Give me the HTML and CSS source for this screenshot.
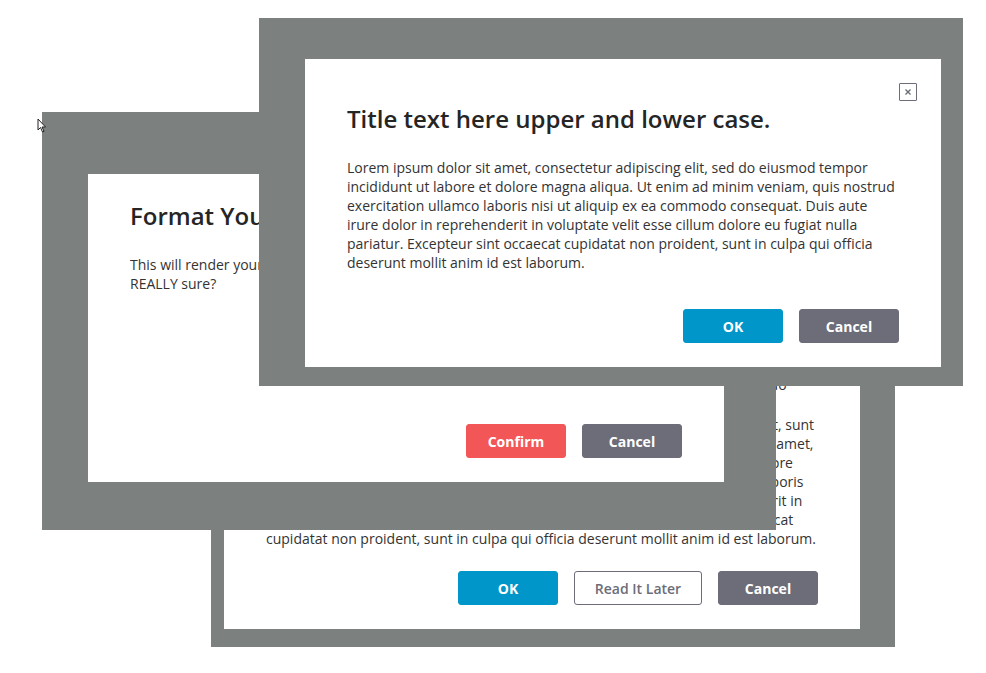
FILE: index.html
```html
<!DOCTYPE html>
<html lang="en">
<head>
<meta charset="utf-8">
<title>Dialogs</title>
<link rel="stylesheet" href="styles.css">
</head>
<body>
<main class="desk">
  <section class="win win-back">
    <div class="dialog dialog-back">
      <h2 class="title">Read this before you continue.</h2>
      <p class="text text-lines">Lorem ipsum dolor sit amet, consectetur adipiscing elit, sed do eiusmod tempor<br>incididunt ut labore et dolore magna aliqua. Ut enim ad minim<br>veniam, quis nostrud exercitation ullamco laboris nisi ut aliquip ex ea commodo</p>
      <p class="text text-lines">Dolore eu fugiat nulla pariatur. Excepteur sint occaecat cupidatat non proident, sunt<br>in culpa qui officia deserunt mollit anim id est laborum. Lorem ipsum dolor sit amet,<br>consectetur adipiscing elit, sed do eiusmod tempor incididunt ut labore et dolore<br>magna aliqua. Ut enim ad minim veniam, quis nostrud exercitation ullamco laboris<br>nisi ut aliquip ex ea commodo consequat. Duis aute irure dolor in reprehenderit in<br>voluptate velit esse cillum dolore eu fugiat nulla pariatur. Excepteur sint occaecat<br>cupidatat non proident, sunt in culpa qui officia deserunt mollit anim id est laborum.</p>
      <div class="actions">
        <button class="btn btn-primary">OK</button>
        <button class="btn btn-outline">Read It Later</button>
        <button class="btn btn-muted">Cancel</button>
      </div>
    </div>
  </section>

  <section class="win win-mid">
    <div class="dialog dialog-fixed dialog-plain">
      <h2 class="title">Format Your Hard Drive?</h2>
      <p class="text">This will render your computer unusable until it is reinstalled. Are you<br>REALLY sure?</p>
      <div class="actions">
        <button class="btn btn-danger">Confirm</button>
        <button class="btn btn-muted">Cancel</button>
      </div>
    </div>
  </section>

  <section class="win win-front">
    <div class="dialog dialog-fixed dialog-closable">
      <button class="close" aria-label="Close">
        <svg viewBox="0 0 8 8" width="8" height="8"><path d="M1.5 1.5 L6.5 6.5 M6.5 1.5 L1.5 6.5" stroke="#666a73" stroke-width="1.3" fill="none"/></svg>
      </button>
      <h2 class="title">Title text here upper and lower case.</h2>
      <p class="text">Lorem ipsum dolor sit amet, consectetur adipiscing elit, sed do eiusmod tempor incididunt ut labore et dolore magna aliqua. Ut enim ad minim veniam, quis nostrud exercitation ullamco laboris nisi ut aliquip ex ea commodo consequat. Duis aute irure dolor in reprehenderit in voluptate velit esse cillum dolore eu fugiat nulla pariatur. Excepteur sint occaecat cupidatat non proident, sunt in culpa qui officia deserunt mollit anim id est laborum.</p>
      <div class="actions">
        <button class="btn btn-primary">OK</button>
        <button class="btn btn-muted">Cancel</button>
      </div>
    </div>
  </section>

  <svg class="cursor" viewBox="0 0 10 16" width="10" height="16"><path d="M1 1 L1 12 L3.5 9.5 L5.5 14 L7 13.3 L5 9 L8.5 9 Z" fill="#fff" stroke="#222" stroke-width="1"/></svg>
</main>
</body>
</html>
```

FILE: styles.css
```css
* { box-sizing: border-box; }
html, body { margin: 0; padding: 0; background: #ffffff; }
body {
  font-family: "Open Sans", "Noto Sans", sans-serif;
  color: #333333;
}
.desk {
  position: relative;
  width: 986px;
  height: 673px;
  overflow: hidden;
}
.win {
  position: absolute;
  background: #7c807f;
}
.win-back {
  left: 211px;
  bottom: 26px;
  width: 684px;
  padding: 13px 35px 18px 13px;
}
.win-mid {
  left: 42px;
  top: 112px;
  padding: 62px 52px 48px 46px;
}
.win-front {
  left: 259px;
  top: 18px;
  padding: 41px 22px 19px 46px;
}
.dialog {
  position: relative;
  width: 636px;
  background: #ffffff;
  padding: 40px 42px 24px;
  display: flex;
  flex-direction: column;
}
.dialog-fixed {
  height: 308px;
}
.dialog-closable { padding-top: 44px; }
.dialog-plain { padding-top: 26px; }
.title {
  margin: 0 0 23px;
  font-size: 24px;
  line-height: 32px;
  font-weight: 600;
  color: #252525;
}
.text {
  margin: 0 0 19px;
  font-size: 14px;
  line-height: 19px;
  color: #333333;
}
.text-lines {
  white-space: nowrap;
}
.text-lines + .text-lines {
  margin-top: 2px;
}
.actions {
  margin-top: auto;
  display: flex;
  justify-content: flex-end;
  gap: 16px;
}
.dialog-back .actions { margin-top: 4px; }
.btn {
  height: 34px;
  min-width: 100px;
  padding: 0 18px;
  border: 1px solid transparent;
  border-radius: 3px;
  font-family: inherit;
  font-size: 14px;
  font-weight: 700;
  color: #ffffff;
  cursor: pointer;
}
.btn-primary { background: #0096c9; border-color: #0096c9; }
.btn-muted { background: #6c6d78; border-color: #6c6d78; }
.btn-danger { background: #f25656; border-color: #f25656; }
.btn-outline {
  background: #ffffff;
  border-color: #6c6d78;
  color: #6c6d78;
  font-weight: 600;
  min-width: 128px;
}
.close {
  position: absolute;
  top: 24px;
  right: 24px;
  width: 18px;
  height: 18px;
  padding: 0;
  border: 1px solid #6c6d78;
  border-radius: 1px;
  background: #ffffff;
  display: flex;
  align-items: center;
  justify-content: center;
}
.close svg { display: block; }
.cursor {
  position: absolute;
  left: 37px;
  top: 118px;
}
```
